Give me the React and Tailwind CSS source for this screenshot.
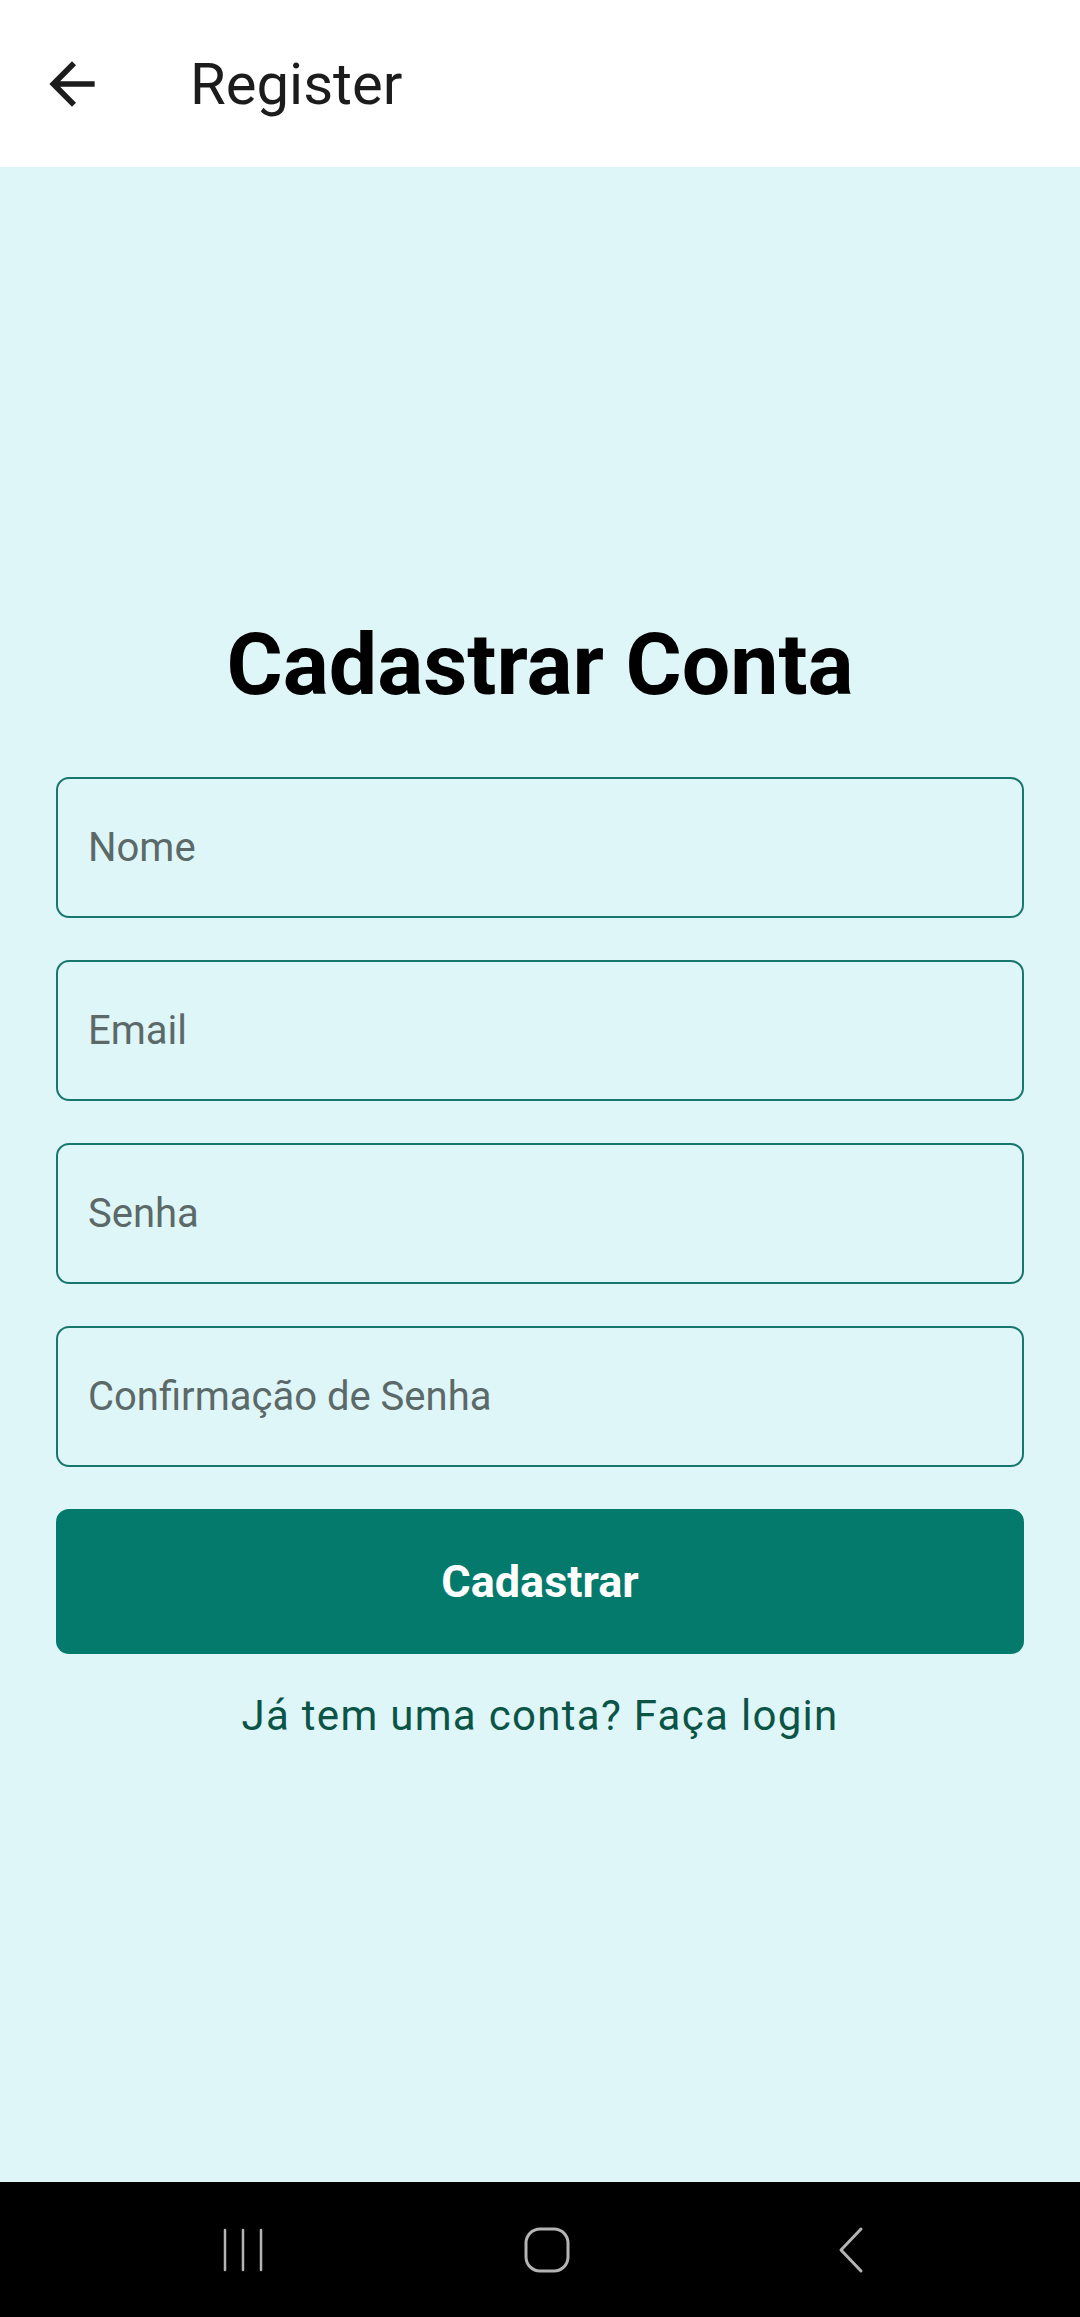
const font = { fontFamily: "Roboto, 'Noto Sans', sans-serif" };

function Field({ placeholder }) {
  return (
    <div className="h-[141px] w-full rounded-[13px] border-2 border-[#17776d] flex items-center px-[30px]">
      <span className="text-[40px] leading-none text-[#5b6969]">{placeholder}</span>
    </div>
  );
}

function NavBar() {
  return (
    <div className="h-[135px] bg-black shrink-0 flex items-center">
      <div className="ml-[91px] w-[912px] grid grid-cols-3 place-items-center">
        <svg width="44" height="46" viewBox="0 0 44 46" fill="none" stroke="#b4b4b4" strokeWidth="2.5" strokeLinecap="round">
          <line x1="4" y1="3" x2="4" y2="43" />
          <line x1="22" y1="3" x2="22" y2="43" />
          <line x1="40" y1="3" x2="40" y2="43" />
        </svg>
        <svg width="46" height="46" viewBox="0 0 46 46" fill="none" stroke="#b4b4b4" strokeWidth="3">
          <rect x="2" y="2" width="42" height="42" rx="14" />
        </svg>
        <svg width="28" height="48" viewBox="0 0 28 48" fill="none" stroke="#b4b4b4" strokeWidth="3" strokeLinecap="round" strokeLinejoin="round">
          <polyline points="24,3 4,24 24,45" />
        </svg>
      </div>
    </div>
  );
}

export default function App() {
  return (
    <div className="w-[1080px] h-[2317px] flex flex-col bg-[#dff6f8]" style={font}>
      <header className="h-[167px] bg-white flex items-center pl-[38px] gap-[84px] shrink-0">
        <svg width="68" height="68" viewBox="0 0 24 24" fill="#1c1c1c">
          <path d="M20 11H7.83l5.59-5.59L12 4l-8 8 8 8 1.41-1.41L7.83 13H20v-2z" />
        </svg>
        <h1 className="text-[58px] text-[#1c1c1c] leading-none">Register</h1>
      </header>

      <main className="flex-1 flex flex-col pt-[455px] px-[56px]">
        <h2 className="text-[86px] font-bold text-black text-center leading-none mb-[69px]">
          Cadastrar Conta
        </h2>
        <div className="flex flex-col gap-[42px]">
          <Field placeholder="Nome" />
          <Field placeholder="Email" />
          <Field placeholder="Senha" />
          <Field placeholder="Confirmação de Senha" />
          <button className="h-[145px] w-full rounded-[13px] bg-[#037a6b] text-white text-[45px] font-bold">
            Cadastrar
          </button>
        </div>
        <p className="text-center text-[42px] tracking-[1.3px] text-[#0b5547] mt-[41px] leading-none">
          Já tem uma conta? Faça login
        </p>
      </main>

      <NavBar />
    </div>
  );
}
